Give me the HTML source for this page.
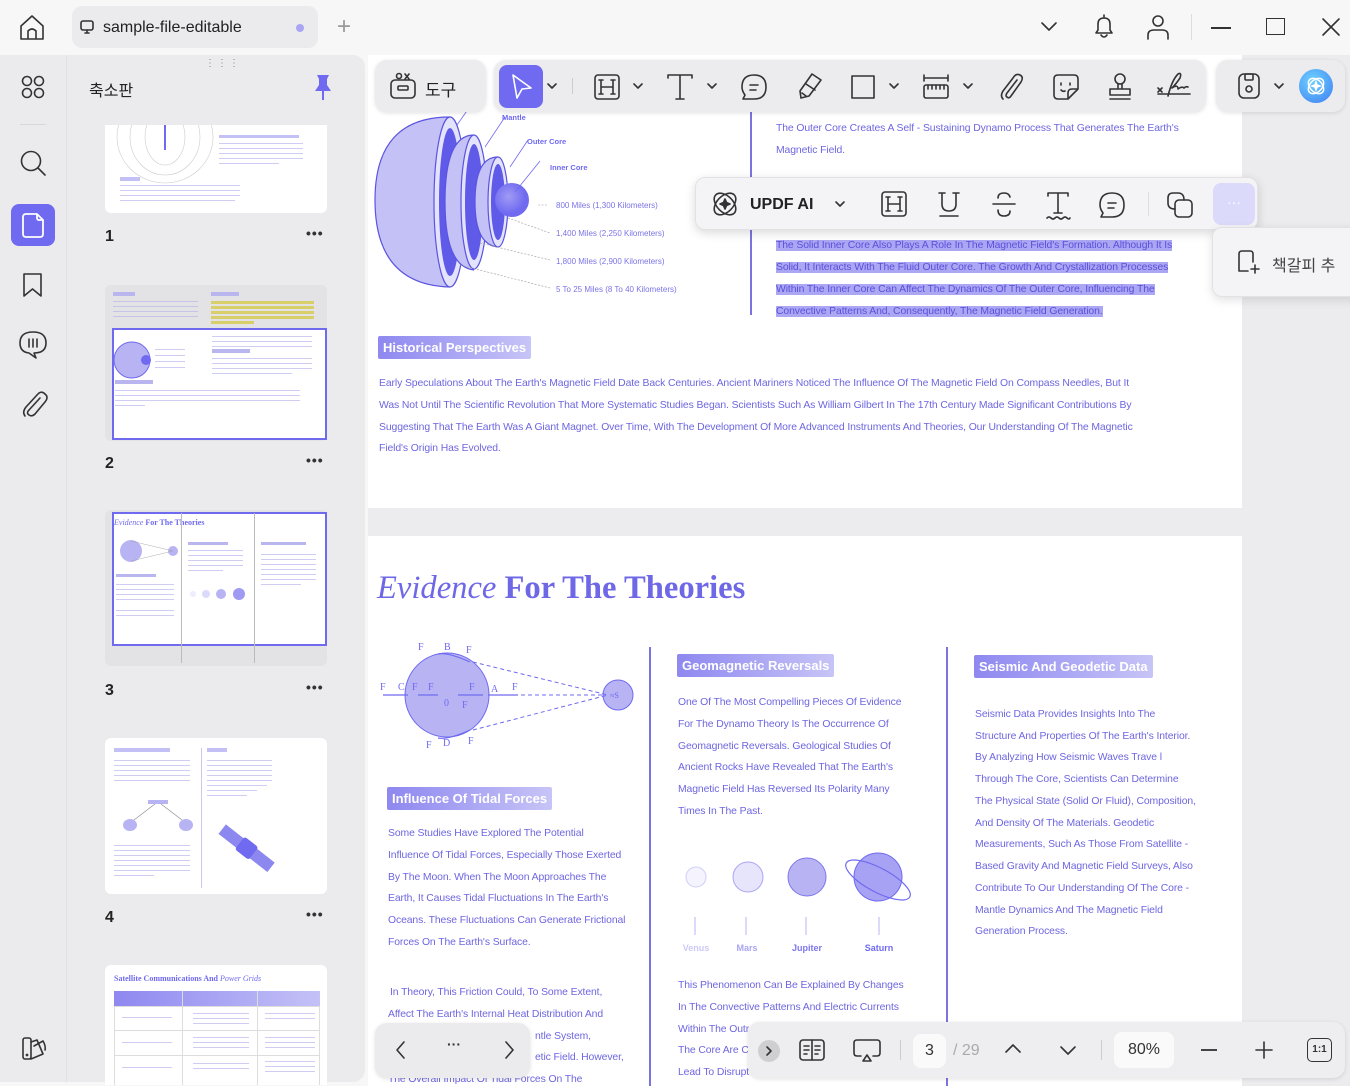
<!DOCTYPE html>
<html><head><meta charset="utf-8">
<style>
*{margin:0;padding:0;box-sizing:border-box}
body{width:1350px;height:1086px;overflow:hidden;background:#f7f7f8;font-family:"Liberation Sans","Noto Sans CJK KR",sans-serif;position:relative}
.a{position:absolute}
.t{position:absolute;font-size:10.4px;color:#6d66e0;white-space:nowrap;letter-spacing:-0.1px}
.hl{background:#aca7f3;color:#5a50dc}
.badge{position:absolute;color:#fff;font-weight:bold;font-size:13px;padding:4px 5px;background:linear-gradient(90deg,#8e88f0,#c7c4f7);border-radius:2px;white-space:nowrap}
.box{position:absolute;background:#ececee;border-radius:12px;box-shadow:0 1px 4px rgba(0,0,0,.12)}
svg{position:absolute;overflow:visible}
.ic{fill:none;stroke:#333;stroke-width:1.6;stroke-linecap:round;stroke-linejoin:round}
.thumb{position:absolute;background:#fff;border-radius:6px}
.ln{position:absolute;height:2px;background:#cfcdf4}
.num{position:absolute;font-weight:bold;font-size:16px;color:#222}
.dots{position:absolute;font-size:14px;font-weight:bold;color:#333;letter-spacing:1px}
</style></head><body>

<!-- top bar -->
<svg style="left:18px;top:14px" width="30" height="28" class="ic"><path d="M3 12 L14 2 L25 12 V25 H3 Z M10 25 V17 Q14 13 18 17 V25"/></svg>
<div class="a" style="left:72px;top:6px;width:246px;height:42px;background:#ebebed;border-radius:10px"></div>
<svg style="left:80px;top:20px" width="16" height="16" class="ic" stroke-width="1.3"><rect x="1" y="1" width="12" height="9" rx="2"/><path d="M7 10 V13 M5 13 H9"/></svg>
<div class="a" style="left:103px;top:19px;font-size:16px;color:#222">sample-file-editable</div>
<div class="a" style="left:296px;top:24px;width:8px;height:8px;border-radius:50%;background:#a9a5f2"></div>
<div class="a" style="left:337px;top:13px;font-size:24px;color:#999;font-weight:200">+</div>
<svg style="left:1041px;top:22px" width="16" height="10" class="ic"><path d="M1 1 L8 8 L15 1"/></svg>
<svg style="left:1093px;top:14px" width="22" height="26" class="ic" stroke-width="1.5"><path d="M3 19 H19 L17 16 V10 Q17 4 11 4 Q5 4 5 10 V16 Z M11 1 V4 M8 21 Q11 25 14 21"/></svg>
<svg style="left:1146px;top:14px" width="24" height="26" class="ic" stroke-width="1.5"><circle cx="12" cy="7" r="5"/><path d="M2 25 V21 Q2 16 8 16 H16 Q22 16 22 21 V25"/></svg>
<div class="a" style="left:1191px;top:14px;width:1px;height:26px;background:#ddd"></div>
<div class="a" style="left:1211px;top:27px;width:20px;height:1.6px;background:#333"></div>
<div class="a" style="left:1266px;top:18px;width:19px;height:17px;border:1.6px solid #333"></div>
<svg style="left:1322px;top:18px" width="18" height="18" class="ic"><path d="M1 1 L17 17 M17 1 L1 17"/></svg>

<!-- left panel -->
<div class="a" style="left:0;top:55px;width:365px;height:1027px;background:#ebebed;border-radius:0 12px 12px 0"></div>
<div class="a" style="left:66px;top:55px;width:1px;height:1027px;background:#e2e2e4"></div>
<div class="a" style="left:205px;top:58px;font-size:10px;color:#888;letter-spacing:2px">⋮⋮⋮</div>
<svg style="left:21px;top:75px" width="24" height="24" class="ic" stroke-width="1.5"><circle cx="6" cy="6" r="4.5"/><circle cx="18" cy="6" r="4.5"/><circle cx="6" cy="18" r="4.5"/><circle cx="18" cy="18" r="4.5"/></svg>
<div class="a" style="left:20px;top:124px;width:26px;height:1px;background:#d8d8da"></div>
<div class="a" style="left:89px;top:77px;font-size:16px;color:#222">축소판</div>
<svg style="left:313px;top:73px" width="20" height="30"><path d="M4 2 H16 L14 6 V12 L18 18 H2 L6 12 V6 Z" fill="#6f6af0"/><rect x="9" y="18" width="2" height="9" fill="#6f6af0"/></svg>
<svg style="left:20px;top:150px" width="28" height="28" class="ic" stroke-width="1.6"><circle cx="11" cy="11" r="9.5"/><path d="M18 18 L25 25"/></svg>
<div class="a" style="left:11px;top:204px;width:44px;height:42px;background:#6f6af0;border-radius:8px"></div>
<svg style="left:22px;top:213px" width="24" height="26" fill="none" stroke="#fff" stroke-width="1.8" stroke-linejoin="round"><path d="M4 1 H15 L21 7 V21 Q21 24 18 24 H4 Q1 24 1 21 V4 Q1 1 4 1 Z M15 1 V5 Q15 7 17 7 H21"/></svg>
<svg style="left:22px;top:272px" width="22" height="26" class="ic" stroke-width="1.6"><path d="M2 2 H19 V24 L10.5 17 L2 24 Z"/></svg>
<svg style="left:18px;top:330px" width="30" height="30" class="ic" stroke-width="1.6"><path d="M15 2 Q28 2 28 13 Q28 23 16 23 L18 28 L11 23 Q2 22 2 13 Q2 2 15 2 Z M11 9 V17 M15 9 V17 M19 9 V17"/></svg>
<svg style="left:20px;top:389px" width="28" height="30" class="ic" stroke-width="1.6"><path d="M20 9 L9 21 Q6 24 9 26 Q12 28 15 25 L25 13 Q29 8 25 5 Q21 1 17 6 L6 18 Q2 23 5 27"/></svg>
<svg style="left:21px;top:1036px" width="26" height="26" class="ic" stroke-width="1.5"><rect x="2" y="2" width="8" height="21" rx="2"/><path d="M10 6 L16 4 L22 18 L10 23 M13 10 L22 5 Q25 10 24 14"/><circle cx="6" cy="19" r=".6"/></svg>

<!-- thumbnails -->
<div class="thumb" style="left:105px;top:125px;width:222px;height:88px;border-radius:0 0 6px 6px;overflow:hidden">
<svg style="left:10px;top:-10px" width="100" height="70" fill="none" stroke="#ccc" stroke-width=".6"><ellipse cx="50" cy="22" rx="20" ry="28"/><ellipse cx="50" cy="22" rx="35" ry="38"/><ellipse cx="50" cy="22" rx="48" ry="46"/><path d="M50 0 V35" stroke="#6f6af0" stroke-width="2"/></svg>
<div class="ln" style="left:114px;top:10px;width:80px;height:3px;background:#c3c0f5"></div>
<div class="ln" style="left:114px;top:18px;width:84px;height:1px"></div><div class="ln" style="left:114px;top:23px;width:84px;height:1px"></div><div class="ln" style="left:114px;top:28px;width:84px;height:1px"></div><div class="ln" style="left:114px;top:33px;width:84px;height:1px"></div><div class="ln" style="left:114px;top:38px;width:60px;height:1px"></div>
<div class="ln" style="left:15px;top:52px;width:20px;height:4px;background:#c3c0f5"></div>
<div class="ln" style="left:15px;top:60px;width:120px;height:1px"></div><div class="ln" style="left:15px;top:65px;width:120px;height:1px"></div><div class="ln" style="left:15px;top:70px;width:120px;height:1px"></div><div class="ln" style="left:15px;top:75px;width:115px;height:1px"></div>
</div>
<div class="num" style="left:105px;top:228px">1</div><div class="dots" style="left:306px;top:225px">•••</div>

<div class="thumb" style="left:105px;top:285px;width:222px;height:156px;background:#e3e3e6"></div>
<div class="a" style="left:112px;top:328px;width:215px;height:112px;background:#fff;border:2px solid #6f6af0"></div>
<div class="ln" style="left:113px;top:292px;width:22px;height:4px;background:#b9b6ef"></div>
<div class="ln" style="left:113px;top:301px;width:85px;height:1px;background:#c6c4e6"></div><div class="ln" style="left:113px;top:306px;width:85px;height:1px;background:#c6c4e6"></div><div class="ln" style="left:113px;top:311px;width:85px;height:1px;background:#c6c4e6"></div><div class="ln" style="left:113px;top:316px;width:85px;height:1px;background:#c6c4e6"></div>
<div class="ln" style="left:211px;top:292px;width:28px;height:4px;background:#b9b6ef"></div>
<div class="ln" style="left:211px;top:301px;width:103px;height:3px;background:#d8cf6a"></div><div class="ln" style="left:211px;top:306px;width:103px;height:3px;background:#d8cf6a"></div><div class="ln" style="left:211px;top:311px;width:103px;height:3px;background:#d8cf6a"></div><div class="ln" style="left:211px;top:316px;width:103px;height:3px;background:#d8cf6a"></div><div class="ln" style="left:211px;top:321px;width:43px;height:3px;background:#d8cf6a"></div>
<svg style="left:114px;top:335px" width="50" height="50"><circle cx="18" cy="25" r="18" fill="#b8b4f4" stroke="#6f6af0"/><circle cx="32" cy="25" r="5" fill="#6f6af0"/></svg>
<div class="ln" style="left:155px;top:349px;width:30px;height:1px"></div><div class="ln" style="left:155px;top:355px;width:30px;height:1px"></div><div class="ln" style="left:155px;top:361px;width:30px;height:1px"></div><div class="ln" style="left:155px;top:367px;width:30px;height:1px"></div>
<div class="ln" style="left:212px;top:336px;width:100px;height:1px"></div><div class="ln" style="left:212px;top:341px;width:100px;height:1px"></div><div class="ln" style="left:212px;top:346px;width:100px;height:1px"></div>
<div class="ln" style="left:212px;top:349px;width:38px;height:4px;background:#b9b6ef"></div>
<div class="ln" style="left:212px;top:358px;width:100px;height:1px"></div><div class="ln" style="left:212px;top:363px;width:100px;height:1px"></div><div class="ln" style="left:212px;top:368px;width:100px;height:1px"></div><div class="ln" style="left:212px;top:373px;width:80px;height:1px"></div>
<div class="ln" style="left:115px;top:380px;width:38px;height:4px;background:#b9b6ef"></div>
<div class="ln" style="left:115px;top:390px;width:185px;height:1px"></div><div class="ln" style="left:115px;top:395px;width:185px;height:1px"></div><div class="ln" style="left:115px;top:400px;width:185px;height:1px"></div><div class="ln" style="left:115px;top:405px;width:30px;height:1px"></div>
<div class="num" style="left:105px;top:455px">2</div><div class="dots" style="left:306px;top:452px">•••</div>

<div class="thumb" style="left:105px;top:510px;width:222px;height:156px;background:#e3e3e6"></div>
<div class="a" style="left:112px;top:512px;width:215px;height:134px;background:#fff;border:2px solid #6f6af0"></div>
<div class="a" style="left:114px;top:518px;font-family:'Liberation Serif',serif;font-size:8px;color:#6f6af0"><i>Evidence</i> <b>For The Theories</b></div>
<svg style="left:115px;top:535px" width="75" height="35"><circle cx="16" cy="16" r="11" fill="#b8b4f4"/><circle cx="58" cy="16" r="5" fill="#b8b4f4"/><path d="M16 6 L58 16 L16 26" stroke="#999" stroke-width=".4" fill="none"/></svg>
<div class="a" style="left:181px;top:513px;width:1px;height:150px;background:#bbb"></div><div class="a" style="left:254px;top:513px;width:1px;height:150px;background:#bbb"></div>
<div class="ln" style="left:188px;top:542px;width:40px;height:3px;background:#b9b6ef"></div>
<div class="ln" style="left:261px;top:542px;width:45px;height:3px;background:#b9b6ef"></div>
<div class="ln" style="left:116px;top:574px;width:40px;height:3px;background:#b9b6ef"></div>
<svg style="left:188px;top:587px" width="62" height="14"><circle cx="5" cy="7" r="3" fill="#eeedfd"/><circle cx="18" cy="7" r="4" fill="#dcdafb"/><circle cx="33" cy="7" r="5" fill="#b8b4f4"/><circle cx="51" cy="7" r="6" fill="#9f9af2"/></svg>
<div class="ln" style="left:188px;top:550px;width:55px;height:1px"></div><div class="ln" style="left:188px;top:555px;width:55px;height:1px"></div><div class="ln" style="left:188px;top:560px;width:55px;height:1px"></div><div class="ln" style="left:188px;top:565px;width:55px;height:1px"></div><div class="ln" style="left:188px;top:570px;width:35px;height:1px"></div>
<div class="ln" style="left:261px;top:554px;width:55px;height:1px"></div><div class="ln" style="left:261px;top:559px;width:55px;height:1px"></div><div class="ln" style="left:261px;top:564px;width:55px;height:1px"></div><div class="ln" style="left:261px;top:569px;width:55px;height:1px"></div><div class="ln" style="left:261px;top:574px;width:55px;height:1px"></div><div class="ln" style="left:261px;top:579px;width:55px;height:1px"></div><div class="ln" style="left:261px;top:584px;width:40px;height:1px"></div>
<div class="ln" style="left:116px;top:584px;width:58px;height:1px"></div><div class="ln" style="left:116px;top:589px;width:58px;height:1px"></div><div class="ln" style="left:116px;top:594px;width:58px;height:1px"></div><div class="ln" style="left:116px;top:599px;width:58px;height:1px"></div><div class="ln" style="left:116px;top:610px;width:58px;height:1px"></div><div class="ln" style="left:116px;top:615px;width:58px;height:1px"></div>
<div class="num" style="left:105px;top:682px">3</div><div class="dots" style="left:306px;top:679px">•••</div>

<div class="thumb" style="left:105px;top:738px;width:222px;height:156px"></div>
<div class="a" style="left:201px;top:748px;width:1px;height:140px;background:#c9c7f0"></div>
<div class="ln" style="left:114px;top:748px;width:56px;height:4px;background:#c3c0f5"></div><div class="ln" style="left:207px;top:748px;width:20px;height:4px;background:#c3c0f5"></div>
<div class="ln" style="left:114px;top:760px;width:76px;height:1px"></div><div class="ln" style="left:114px;top:765px;width:76px;height:1px"></div><div class="ln" style="left:114px;top:770px;width:76px;height:1px"></div><div class="ln" style="left:114px;top:775px;width:76px;height:1px"></div><div class="ln" style="left:114px;top:780px;width:76px;height:1px"></div>
<div class="ln" style="left:207px;top:760px;width:65px;height:1px"></div><div class="ln" style="left:207px;top:765px;width:65px;height:1px"></div><div class="ln" style="left:207px;top:770px;width:65px;height:1px"></div><div class="ln" style="left:207px;top:775px;width:65px;height:1px"></div><div class="ln" style="left:207px;top:780px;width:65px;height:1px"></div><div class="ln" style="left:207px;top:785px;width:60px;height:1px"></div><div class="ln" style="left:207px;top:790px;width:50px;height:1px"></div><div class="ln" style="left:207px;top:795px;width:40px;height:1px"></div>
<svg style="left:118px;top:795px" width="80" height="40"><rect x="30" y="5" width="20" height="4" fill="#b8b4f4"/><path d="M37 9 L12 28 M43 9 L68 28" stroke="#888" stroke-width=".6"/><ellipse cx="12" cy="30" rx="7" ry="6" fill="#b8b4f4"/><ellipse cx="68" cy="30" rx="7" ry="6" fill="#b8b4f4"/></svg>
<div class="ln" style="left:114px;top:845px;width:76px;height:1px"></div><div class="ln" style="left:114px;top:850px;width:76px;height:1px"></div><div class="ln" style="left:114px;top:855px;width:76px;height:1px"></div><div class="ln" style="left:114px;top:860px;width:76px;height:1px"></div><div class="ln" style="left:114px;top:865px;width:76px;height:1px"></div><div class="ln" style="left:114px;top:870px;width:76px;height:1px"></div><div class="ln" style="left:114px;top:875px;width:40px;height:1px"></div>
<svg style="left:215px;top:822px" width="62" height="55"><g transform="rotate(38 31 27)"><rect x="0" y="20" width="22" height="12" fill="#8d88f0"/><rect x="40" y="20" width="22" height="12" fill="#8d88f0"/><rect x="22" y="18" width="18" height="16" rx="3" fill="#6f6af0"/></g></svg>
<div class="num" style="left:105px;top:909px">4</div><div class="dots" style="left:306px;top:906px">•••</div>

<div class="thumb" style="left:105px;top:965px;width:222px;height:120px;border-radius:6px 6px 0 0;overflow:hidden">
<div class="a" style="left:9px;top:9px;font-family:'Liberation Serif',serif;font-size:8px;color:#6f6af0;font-weight:bold">Satellite Communications And <i style="font-weight:normal">Power Grids</i></div>
<div class="a" style="left:9px;top:26px;width:206px;height:15px;background:linear-gradient(90deg,#8e88f0,#c4c1f7)"></div>
<div class="a" style="left:9px;top:41px;width:206px;height:80px;border:1px solid #ddd"></div>
<div class="a" style="left:77px;top:26px;width:1px;height:95px;background:#ddd"></div><div class="a" style="left:152px;top:26px;width:1px;height:95px;background:#ddd"></div>
<div class="a" style="left:9px;top:65px;width:206px;height:1px;background:#ddd"></div><div class="a" style="left:9px;top:90px;width:206px;height:1px;background:#ddd"></div>
<div class="ln" style="left:17px;top:52px;width:50px;height:1px"></div><div class="ln" style="left:88px;top:48px;width:56px;height:1px"></div><div class="ln" style="left:88px;top:53px;width:56px;height:1px"></div><div class="ln" style="left:88px;top:58px;width:56px;height:1px"></div><div class="ln" style="left:160px;top:48px;width:50px;height:1px"></div><div class="ln" style="left:160px;top:53px;width:50px;height:1px"></div>
<div class="ln" style="left:17px;top:77px;width:50px;height:1px"></div><div class="ln" style="left:88px;top:72px;width:56px;height:1px"></div><div class="ln" style="left:88px;top:77px;width:56px;height:1px"></div><div class="ln" style="left:88px;top:82px;width:56px;height:1px"></div><div class="ln" style="left:160px;top:72px;width:50px;height:1px"></div><div class="ln" style="left:160px;top:77px;width:50px;height:1px"></div><div class="ln" style="left:160px;top:82px;width:50px;height:1px"></div>
<div class="ln" style="left:17px;top:102px;width:50px;height:1px"></div><div class="ln" style="left:88px;top:98px;width:56px;height:1px"></div><div class="ln" style="left:88px;top:103px;width:56px;height:1px"></div><div class="ln" style="left:160px;top:96px;width:50px;height:1px"></div><div class="ln" style="left:160px;top:101px;width:50px;height:1px"></div><div class="ln" style="left:160px;top:106px;width:50px;height:1px"></div>
</div>

<!-- main area -->
<div class="a" style="left:368px;top:55px;width:982px;height:1031px;background:#ececee"></div>
<div class="a" style="left:368px;top:55px;width:874px;height:453px;background:#fff"></div>
<div class="a" style="left:368px;top:536px;width:874px;height:550px;background:#fff"></div>

<!-- page 1 content -->
<svg style="left:370px;top:95px" width="330" height="225">
<defs><radialGradient id="g1" cx=".4" cy=".4"><stop offset="0" stop-color="#a09bf5"/><stop offset="1" stop-color="#6f6af0"/></radialGradient></defs>
<path d="M80 22 Q5 22 5 105 Q5 190 80 192" fill="#c4c1f7" stroke="#5a54e0" stroke-width="1.2"/>
<ellipse cx="80" cy="107" rx="16" ry="85" fill="#e4e3fc" stroke="#5a54e0" stroke-width="1.2"/>
<ellipse cx="80" cy="107" rx="11" ry="74" fill="#5f5ae8"/>
<path d="M104 40 Q75 40 75 107 Q75 172 104 175" fill="#c4c1f7" stroke="#5a54e0" stroke-width="1.2"/>
<ellipse cx="104" cy="107" rx="13" ry="67" fill="#e4e3fc" stroke="#5a54e0" stroke-width="1.2"/>
<ellipse cx="104" cy="107" rx="9" ry="58" fill="#5f5ae8"/>
<path d="M128 62 Q105 62 105 107 Q105 150 128 152" fill="#c4c1f7" stroke="#5a54e0" stroke-width="1.2"/>
<ellipse cx="128" cy="107" rx="10" ry="45" fill="#e4e3fc" stroke="#5a54e0" stroke-width="1.2"/>
<ellipse cx="128" cy="107" rx="7" ry="38" fill="#5f5ae8"/>
<circle cx="142" cy="105" r="17" fill="url(#g1)"/>
<g stroke="#6f6af0" stroke-width=".8"><path d="M87 30 L108 0 M115 52 L135 22 M140 72 L158 45 M145 97 L170 66"/></g>
<g stroke="#999" stroke-width=".6" stroke-dasharray="2 1.5" fill="none"><path d="M168 110 L178 110 M138 123 L180 138 M110 148 L180 165 M90 170 L180 193"/></g>
<g fill="#6f6af0" font-size="7.5" font-weight="bold" font-family="Liberation Sans"><text x="101" y="8">rust</text><text x="132" y="25">Mantle</text><text x="157" y="49">Outer Core</text><text x="180" y="75">Inner Core</text></g>
<g fill="#7a74e6" font-size="8" font-family="Liberation Sans"><text x="186" y="113">800 Miles (1,300 Kilometers)</text><text x="186" y="141">1,400 Miles (2,250 Kilometers)</text><text x="186" y="169">1,800 Miles (2,900 Kilometers)</text><text x="186" y="197">5 To 25 Miles (8 To 40 Kilometers)</text></g>
</svg>
<div class="a" style="left:750px;top:110px;width:1.5px;height:205px;background:#7b74e0"></div>
<div class="t" style="left:776px;top:123px">The Outer Core Creates A Self - Sustaining Dynamo Process That Generates The Earth's</div>
<div class="t" style="left:776px;top:145px">Magnetic Field.</div>
<div class="t" style="left:776px;top:240px"><span class="hl">The Solid Inner Core Also Plays A Role In The Magnetic Field's Formation. Although It Is</span></div>
<div class="t" style="left:776px;top:262px"><span class="hl">Solid, It Interacts With The Fluid Outer Core. The Growth And Crystallization Processes</span></div>
<div class="t" style="left:776px;top:284px"><span class="hl">Within The Inner Core Can Affect The Dynamics Of The Outer Core, Influencing The</span></div>
<div class="t" style="left:776px;top:306px"><span class="hl">Convective Patterns And, Consequently, The Magnetic Field Generation.</span></div>
<div class="badge" style="left:378px;top:336px">Historical Perspectives</div>
<div class="t" style="left:379px;top:378px">Early Speculations About The Earth's Magnetic Field Date Back Centuries. Ancient Mariners Noticed The Influence Of The Magnetic Field On Compass Needles, But It</div>
<div class="t" style="left:379px;top:400px">Was Not Until The Scientific Revolution That More Systematic Studies Began. Scientists Such As William Gilbert In The 17th Century Made Significant Contributions By</div>
<div class="t" style="left:379px;top:422px">Suggesting That The Earth Was A Giant Magnet. Over Time, With The Development Of More Advanced Instruments And Theories, Our Understanding Of The Magnetic</div>
<div class="t" style="left:379px;top:443px">Field's Origin Has Evolved.</div>

<!-- page 2 -->
<div class="a" style="left:377px;top:570px;font-family:'Liberation Serif',serif;font-size:32.6px;color:#6e67e6;white-space:nowrap"><i>Evidence</i> <b>For The Theories</b></div>
<div class="a" style="left:649px;top:647px;width:1.5px;height:439px;background:#7b74e0"></div>
<div class="a" style="left:946px;top:647px;width:1.5px;height:439px;background:#7b74e0"></div>
<svg style="left:378px;top:640px" width="262" height="112" font-family="Liberation Serif" font-size="10" fill="#6f6af0">
<circle cx="69" cy="55" r="42" fill="#b8b4f4" stroke="#6f6af0"/>
<circle cx="240" cy="55" r="15" fill="#b8b4f4" stroke="#6f6af0"/>
<g stroke="#6f6af0" stroke-dasharray="4 3" fill="none" stroke-width="1"><path d="M95 22 L230 55 M95 90 L230 55 M115 55 L228 55"/></g>
<g stroke="#6f6af0" stroke-width="1.2" fill="none"><path d="M5 55 H30 M40 55 H60 M80 55 H105 M110 55 H140 M60 14 Q70 12 92 22 M60 98 Q70 100 92 90"/></g>
<g fill="#6f6af0"><text x="40" y="10">F</text><text x="66" y="10">B</text><text x="88" y="13">F</text><text x="2" y="50">F</text><text x="20" y="50">C</text><text x="34" y="50">F</text><text x="50" y="50">F</text><text x="91" y="50">F</text><text x="113" y="52">A</text><text x="134" y="50">F</text><text x="66" y="66">0</text><text x="84" y="68">F</text><text x="48" y="108">F</text><text x="65" y="106">D</text><text x="90" y="104">F</text><text x="232" y="58" font-size="8">≈S</text></g>
</svg>
<div class="badge" style="left:387px;top:787px">Influence Of Tidal Forces</div>
<div class="t" style="left:388px;top:828px">Some Studies Have Explored The Potential</div>
<div class="t" style="left:388px;top:850px">Influence Of Tidal Forces, Especially Those Exerted</div>
<div class="t" style="left:388px;top:872px">By The Moon. When The Moon Approaches The</div>
<div class="t" style="left:388px;top:893px">Earth, It Causes Tidal Fluctuations In The Earth's</div>
<div class="t" style="left:388px;top:915px">Oceans. These Fluctuations Can Generate Frictional</div>
<div class="t" style="left:388px;top:937px">Forces On The Earth's Surface.</div>
<div class="t" style="left:390px;top:987px">In Theory, This Friction Could, To Some Extent,</div>
<div class="t" style="left:388px;top:1009px">Affect The Earth's Internal Heat Distribution And</div>
<div class="t" style="left:535px;top:1031px">ntle System,</div>
<div class="t" style="left:535px;top:1052px">etic Field. However,</div>
<div class="t" style="left:388px;top:1074px">The Overall Impact Of Tidal Forces On The</div>

<div class="badge" style="left:677px;top:654px">Geomagnetic Reversals</div>
<div class="t" style="left:678px;top:697px">One Of The Most Compelling Pieces Of Evidence</div>
<div class="t" style="left:678px;top:719px">For The Dynamo Theory Is The Occurrence Of</div>
<div class="t" style="left:678px;top:741px">Geomagnetic Reversals. Geological Studies Of</div>
<div class="t" style="left:678px;top:762px">Ancient Rocks Have Revealed That The Earth's</div>
<div class="t" style="left:678px;top:784px">Magnetic Field Has Reversed Its Polarity Many</div>
<div class="t" style="left:678px;top:806px">Times In The Past.</div>
<svg style="left:670px;top:850px" width="250" height="110" font-family="Liberation Sans" font-size="9" font-weight="bold" text-anchor="middle">
<circle cx="26" cy="27" r="10" fill="#f4f3fe" stroke="#cfcdf6"/>
<circle cx="78" cy="27" r="15" fill="#e6e5fc" stroke="#a9a5f2"/>
<circle cx="137" cy="27" r="19" fill="#b8b4f4" stroke="#7d77ec"/>
<circle cx="208" cy="27" r="24" fill="#a7a2f3" stroke="#6f6af0"/>
<ellipse cx="208" cy="30" rx="36" ry="12" transform="rotate(28 208 30)" fill="none" stroke="#6f6af0" stroke-width="1.2"/>
<g stroke="#b8b4f4"><path d="M25 67 V85 M76 67 V85 M136 67 V85 M209 67 V85"/></g>
<text x="26" y="101" fill="#ccc9f7">Venus</text><text x="77" y="101" fill="#a9a5f2">Mars</text><text x="137" y="101" fill="#7d77ec">Jupiter</text><text x="209" y="101" fill="#6f6af0">Saturn</text>
</svg>
<div class="t" style="left:678px;top:980px">This Phenomenon Can Be Explained By Changes</div>
<div class="t" style="left:678px;top:1002px">In The Convective Patterns And Electric Currents</div>
<div class="t" style="left:678px;top:1024px">Within The Outr</div>
<div class="t" style="left:678px;top:1045px">The Core Are C</div>
<div class="t" style="left:678px;top:1067px">Lead To Disrupt</div>

<div class="badge" style="left:974px;top:655px">Seismic And Geodetic Data</div>
<div class="t" style="left:975px;top:709px">Seismic Data Provides Insights Into The</div>
<div class="t" style="left:975px;top:731px">Structure And Properties Of The Earth's Interior.</div>
<div class="t" style="left:975px;top:752px">By Analyzing How Seismic Waves Trave l</div>
<div class="t" style="left:975px;top:774px">Through The Core, Scientists Can Determine</div>
<div class="t" style="left:975px;top:796px">The Physical State (Solid Or Fluid), Composition,</div>
<div class="t" style="left:975px;top:818px">And Density Of The Materials. Geodetic</div>
<div class="t" style="left:975px;top:839px">Measurements, Such As Those From Satellite -</div>
<div class="t" style="left:975px;top:861px">Based Gravity And Magnetic Field Surveys, Also</div>
<div class="t" style="left:975px;top:883px">Contribute To Our Understanding Of The Core -</div>
<div class="t" style="left:975px;top:905px">Mantle Dynamics And The Magnetic Field</div>
<div class="t" style="left:975px;top:926px">Generation Process.</div>

<!-- toolbars -->
<div class="box" style="left:375px;top:60px;width:111px;height:52px"></div>
<svg style="left:389px;top:72px" width="28" height="28" class="ic" stroke-width="1.5"><rect x="2" y="8" width="24" height="18" rx="4"/><rect x="9" y="14" width="10" height="4" rx="1"/><circle cx="10" cy="4" r="2.5"/><path d="M16 2 L20 7 M20 2 L16 7"/></svg>
<div class="a" style="left:425px;top:76px;font-size:17px;color:#222">도구</div>
<div class="box" style="left:494px;top:60px;width:712px;height:52px"></div>
<div class="a" style="left:499px;top:65px;width:44px;height:43px;background:#6f6af0;border-radius:8px"></div>
<svg style="left:510px;top:73px" width="24" height="28" fill="none" stroke="#fff" stroke-width="1.6" stroke-linejoin="round"><path d="M3 2 L21 15 L12 16 L7 25 Z"/></svg>
<svg style="left:547px;top:83px" width="10" height="7" class="ic" stroke-width="1.4"><path d="M1 1 L5 5 L9 1"/></svg>
<div class="a" style="left:572px;top:78px;width:1px;height:16px;background:#ccc"></div>
<svg style="left:594px;top:74px" width="26" height="26" class="ic" stroke-width="1.4"><rect x="1" y="1" width="24" height="24" rx="3"/><path d="M7 6 V20 M19 6 V20 M7 13 H19 M5 6 H9 M17 6 H21 M5 20 H9 M17 20 H21"/></svg>
<svg style="left:633px;top:83px" width="10" height="7" class="ic" stroke-width="1.4"><path d="M1 1 L5 5 L9 1"/></svg>
<svg style="left:666px;top:73px" width="28" height="28" class="ic" stroke-width="1.5"><path d="M2 5 V2 H26 V5 M14 2 V26 M10 26 H18"/></svg>
<svg style="left:707px;top:83px" width="10" height="7" class="ic" stroke-width="1.4"><path d="M1 1 L5 5 L9 1"/></svg>
<svg style="left:740px;top:73px" width="28" height="28" class="ic" stroke-width="1.5"><path d="M14 2 Q26 2 26 14 Q26 26 14 26 H3 L5 22 Q2 18 2 14 Q2 2 14 2 Z M10 12 H18 M10 17 H16"/></svg>
<svg style="left:796px;top:72px" width="28" height="30" class="ic" stroke-width="1.5"><path d="M16 2 L25 8 L13 24 L5 26 L4 19 Z M6 21 L10 24 M10 12 L19 18"/></svg>
<svg style="left:851px;top:75px" width="24" height="24" class="ic" stroke-width="1.5"><rect x="1" y="1" width="22" height="22"/></svg>
<svg style="left:889px;top:83px" width="10" height="7" class="ic" stroke-width="1.4"><path d="M1 1 L5 5 L9 1"/></svg>
<svg style="left:922px;top:73px" width="28" height="28" class="ic" stroke-width="1.5"><path d="M2 2 V8 M26 2 V8 M2 5 H26"/><rect x="2" y="12" width="24" height="13" rx="2"/><path d="M6 12 V16 M10 12 V16 M14 12 V16 M18 12 V16 M22 12 V16"/></svg>
<svg style="left:963px;top:83px" width="10" height="7" class="ic" stroke-width="1.4"><path d="M1 1 L5 5 L9 1"/></svg>
<svg style="left:998px;top:73px" width="28" height="28" class="ic" stroke-width="1.5"><path d="M19 7 L9 20 Q7 23 9 24 Q11 26 13 23 L23 9 Q26 4 22 2 Q18 0 15 5 L5 18 Q2 23 5 26"/></svg>
<svg style="left:1052px;top:73px" width="28" height="28" class="ic" stroke-width="1.5"><path d="M26 16 V6 Q26 2 22 2 H6 Q2 2 2 6 V22 Q2 26 6 26 H16 Z M16 26 V20 Q16 16 20 16 H26 M9 10 V12 M18 10 V12 M9 17 Q11 19 13 18"/></svg>
<svg style="left:1106px;top:72px" width="28" height="30" class="ic" stroke-width="1.5"><circle cx="14" cy="7" r="5"/><path d="M12 12 V17 M16 12 V17 M4 17 H24 V23 H4 Z M4 27 H24"/></svg>
<svg style="left:1156px;top:70px" width="36" height="32" class="ic" stroke-width="1.3"><path d="M2 18 L6 22 M6 18 L2 22 M2 24 H34 M12 26 Q16 10 22 4 Q26 2 24 8 Q20 14 16 18 Q22 14 22 19 Q26 16 28 18 Q30 16 32 17"/></svg>
<div class="box" style="left:1216px;top:60px;width:129px;height:52px"></div>
<svg style="left:1237px;top:72px" width="24" height="28" class="ic" stroke-width="1.5"><rect x="2" y="2" width="20" height="24" rx="5"/><rect x="8" y="2" width="8" height="6" rx="1"/><circle cx="12" cy="17" r="3"/></svg>
<svg style="left:1274px;top:83px" width="10" height="7" class="ic" stroke-width="1.4"><path d="M1 1 L5 5 L9 1"/></svg>
<div class="a" style="left:1299px;top:69px;width:34px;height:34px;border-radius:50%;background:radial-gradient(circle at 40% 35%,#6fd3ff,#3d7cf2)"></div>
<svg style="left:1304px;top:74px" width="24" height="24" fill="none" stroke="#fff" stroke-width="1.5"><ellipse cx="12" cy="12" rx="9" ry="6" transform="rotate(45 12 12)"/><ellipse cx="12" cy="12" rx="9" ry="6" transform="rotate(-45 12 12)"/><path d="M12 8 L13 11 L16 12 L13 13 L12 16 L11 13 L8 12 L11 11 Z" fill="#fff"/></svg>

<!-- floating UPDF AI toolbar -->
<div class="a" style="left:695px;top:177px;width:563px;height:53px;background:#f4f4f6;border-radius:10px;box-shadow:0 3px 10px rgba(0,0,0,.15);border:1px solid #e2e2e4"></div>
<svg style="left:708px;top:188px" width="34" height="32" class="ic" stroke-width="1.5"><ellipse cx="17" cy="16" rx="13" ry="8" transform="rotate(45 17 16)"/><ellipse cx="17" cy="16" rx="13" ry="8" transform="rotate(-45 17 16)"/><path d="M17 11 L18.5 14.5 L22 16 L18.5 17.5 L17 21 L15.5 17.5 L12 16 L15.5 14.5 Z" fill="#333"/></svg>
<div class="a" style="left:750px;top:196px;font-size:16px;font-weight:bold;color:#222">UPDF AI</div>
<svg style="left:835px;top:201px" width="10" height="7" class="ic" stroke-width="1.3" stroke="#555"><path d="M1 1 L5 5 L9 1"/></svg>
<svg style="left:881px;top:191px" width="26" height="26" class="ic" stroke-width="1.4"><rect x="1" y="1" width="24" height="24" rx="3"/><path d="M7 6 V20 M19 6 V20 M7 13 H19 M5 6 H9 M17 6 H21 M5 20 H9 M17 20 H21"/></svg>
<svg style="left:937px;top:191px" width="24" height="28" class="ic" stroke-width="1.5"><path d="M5 2 V13 Q5 20 12 20 Q19 20 19 13 V2 M2 2 H8 M16 2 H22 M3 25 H21"/></svg>
<svg style="left:991px;top:191px" width="26" height="28" class="ic" stroke-width="1.5"><path d="M19 6 Q18 2 13 2 Q7 2 7 7 M2 13 H24 M7 19 Q7 25 13 25 Q19 25 19 20"/></svg>
<svg style="left:1045px;top:191px" width="26" height="30" class="ic" stroke-width="1.5"><path d="M3 5 V2 H23 V5 M13 2 V22 M9 22 H17 M2 27 Q4 25 6 27 Q8 29 10 27 Q12 25 14 27 Q16 29 18 27 Q20 25 22 27 Q24 29 25 27"/></svg>
<svg style="left:1098px;top:191px" width="28" height="28" class="ic" stroke-width="1.5"><path d="M14 2 Q26 2 26 14 Q26 26 14 26 H3 L5 22 Q2 18 2 14 Q2 2 14 2 Z M10 12 H18 M10 17 H16"/></svg>
<div class="a" style="left:1148px;top:192px;width:1px;height:24px;background:#ddd"></div>
<svg style="left:1166px;top:191px" width="28" height="28" class="ic" stroke-width="1.5"><rect x="9" y="9" width="17" height="17" rx="4"/><path d="M9 18 Q2 18 2 12 V7 Q2 2 7 2 H12 Q18 2 18 9"/></svg>
<div class="a" style="left:1213px;top:183px;width:42px;height:42px;background:#dcdafb;border-radius:8px;color:#fff;text-align:center;font-size:14px;line-height:38px">···</div>
<div class="a" style="left:1212px;top:227px;width:150px;height:70px;background:#f4f4f6;border-radius:10px 0 0 10px;box-shadow:0 3px 10px rgba(0,0,0,.12);border:1px solid #e2e2e4"></div>
<svg style="left:1236px;top:249px" width="24" height="28" class="ic" stroke-width="1.4"><path d="M12 22 H3 V5 Q3 2 6 2 H14 Q17 2 17 5 V13 M15 20 H23 M19 16 V24"/></svg>
<div class="a" style="left:1272px;top:252px;font-size:16px;color:#444;white-space:nowrap">책갈피 추</div>

<!-- bottom bars -->
<div class="box" style="left:375px;top:1023px;width:155px;height:55px;background:#ebebed"></div>
<svg style="left:395px;top:1040px" width="12" height="20" class="ic" stroke-width="1.6"><path d="M9 2 L2 10 L9 18"/></svg>
<div class="a" style="left:447px;top:1036px;font-size:14px;color:#333;font-weight:bold">···</div>
<svg style="left:503px;top:1040px" width="12" height="20" class="ic" stroke="#aaa" stroke-width="1.6"><path d="M3 2 L10 10 L3 18"/></svg>

<div class="box" style="left:748px;top:1022px;width:597px;height:56px;background:#eeeef0"></div>
<div class="a" style="left:758px;top:1040px;width:22px;height:22px;border-radius:50%;background:#cfcfd2"></div>
<svg style="left:765px;top:1045px" width="8" height="12" class="ic" stroke-width="1.5"><path d="M2 2 L6 6 L2 10"/></svg>
<svg style="left:798px;top:1038px" width="28" height="24" class="ic" stroke-width="1.5"><rect x="2" y="2" width="24" height="20" rx="3"/><path d="M14 2 V22 M6 8 H11 M6 12 H11 M6 16 H9 M17 8 H22 M17 12 H22 M17 16 H20"/></svg>
<svg style="left:852px;top:1038px" width="30" height="26" class="ic" stroke-width="1.5"><path d="M9 18 H5 Q2 18 2 15 V5 Q2 2 5 2 H25 Q28 2 28 5 V15 Q28 18 25 18 H21 M11 23 L15 17 L19 23 Z"/></svg>
<div class="a" style="left:900px;top:1040px;width:1px;height:20px;background:#ccc"></div>
<div class="a" style="left:913px;top:1034px;width:33px;height:34px;background:#fafafa;border-radius:8px;font-size:16px;color:#333;text-align:center;line-height:34px">3</div>
<div class="a" style="left:953px;top:1042px;font-size:16px;color:#aaa">/ 29</div>
<svg style="left:1005px;top:1043px" width="16" height="10" class="ic" stroke-width="1.5"><path d="M1 9 L8 2 L15 9"/></svg>
<svg style="left:1060px;top:1046px" width="16" height="10" class="ic" stroke-width="1.5"><path d="M1 1 L8 8 L15 1"/></svg>
<div class="a" style="left:1101px;top:1040px;width:1px;height:20px;background:#ccc"></div>
<div class="a" style="left:1114px;top:1032px;width:60px;height:36px;background:#fafafa;border-radius:8px;font-size:16px;color:#333;text-align:center;line-height:36px">80%</div>
<div class="a" style="left:1201px;top:1049px;width:16px;height:1.6px;background:#444"></div>
<svg style="left:1255px;top:1041px" width="18" height="18" class="ic" stroke-width="1.6"><path d="M9 1 V17 M1 9 H17"/></svg>
<div class="a" style="left:1307px;top:1038px;width:25px;height:24px;border:1.6px solid #333;border-radius:5px;font-size:10px;font-weight:bold;text-align:center;line-height:21px;color:#333">1:1</div>

</body></html>
